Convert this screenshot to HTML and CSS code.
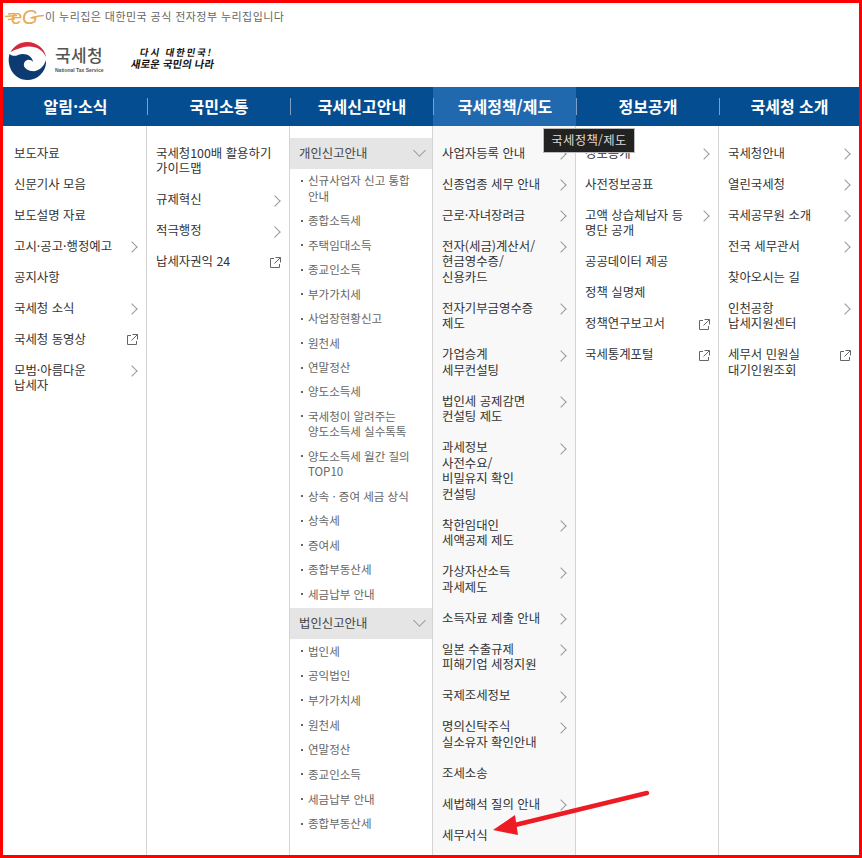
FILE: index.html
```html
<!DOCTYPE html>
<html lang="ko">
<head>
<meta charset="utf-8">
<title>국세청</title>
<link rel="stylesheet" href="styles.css">
</head>
<body>
<div class="frame">
  <div class="gov">
    <svg class="eg" width="40" height="20" viewBox="0 0 40 20">
      <path d="M1 10.500 L13 9.500 M4 8 L11 7.500 M4 13.500 L11 13 M28 11.500 C32 10.500 36 9.500 40 9.500" stroke="#e8ab55" stroke-width="1.500" fill="none"/>
      <text x="7" y="18" class="eg-t">eG</text>
    </svg>
    <span>이 누리집은 대한민국 공식 전자정부 누리집입니다</span>
  </div>
  <div class="brand">
    <svg class="emblem" width="38" height="38" viewBox="0 0 38 38">
      <path d="M1.500 12 C-2 24 6 38 19 38 C31 38 39 28 38 18 C36 25 30 30 23.500 29 C17 28 14 23 17 19.500 C19 17 23 17 25 20 C24.500 14 17 10 10 13 C7 14.500 4 14 1.500 12Z" fill="#0d3a70"/>
      <path d="M2.500 10 C6 4 12 0 19 0 C29 0 37 7 38 15 C35 8 28 4 20 4.500 C13 5 7 8 2.500 10Z" fill="#d8263c"/>
    </svg>
    <div class="ntx">
      <strong>국세청</strong>
      <small>National Tax Service</small>
    </div>
    <div class="slogan">
      <span>다시 대한민국!</span>
      <span>새로운 국민의 나라</span>
    </div>
  </div>
  <nav class="gnb">
    <a>알림·소식</a><a>국민소통</a><a>국세신고안내</a><a class="on">국세정책/제도</a><a>정보공개</a><a>국세청 소개</a>
  </nav>
  <div class="menu">
    <ul class="col first">
      <li>보도자료</li>
      <li>신문기사 모음</li>
      <li>보도설명 자료</li>
      <li class="more">고시·공고·행정예고</li>
      <li>공지사항</li>
      <li class="more">국세청 소식</li>
      <li class="ext">국세청 동영상</li>
      <li class="more">모범·아름다운<br>납세자</li>
    </ul>
    <ul class="col">
      <li>국세청100배 활용하기<br>가이드맵</li>
      <li class="more">규제혁신</li>
      <li class="more">적극행정</li>
      <li class="ext">납세자권익 24</li>
    </ul>
    <div class="col tree">
      <h3>개인신고안내</h3>
      <ul>
        <li>신규사업자 신고 통합<br>안내</li>
        <li>종합소득세</li>
        <li>주택임대소득</li>
        <li>종교인소득</li>
        <li>부가가치세</li>
        <li>사업장현황신고</li>
        <li>원천세</li>
        <li>연말정산</li>
        <li>양도소득세</li>
        <li>국세청이 알려주는<br>양도소득세 실수톡톡</li>
        <li>양도소득세 월간 질의<br>TOP10</li>
        <li>상속 · 증여 세금 상식</li>
        <li>상속세</li>
        <li>증여세</li>
        <li>종합부동산세</li>
        <li>세금납부 안내</li>
      </ul>
      <h3>법인신고안내</h3>
      <ul class="corp">
        <li>법인세</li>
        <li>공익법인</li>
        <li>부가가치세</li>
        <li>원천세</li>
        <li>연말정산</li>
        <li>종교인소득</li>
        <li>세금납부 안내</li>
        <li>종합부동산세</li>
      </ul>
    </div>
    <ul class="col grey">
      <li class="more">사업자등록 안내</li>
      <li class="more">신종업종 세무 안내</li>
      <li class="more">근로·자녀장려금</li>
      <li class="more">전자(세금)계산서/<br>현금영수증/<br>신용카드</li>
      <li class="more">전자기부금영수증<br>제도</li>
      <li class="more">가업승계<br>세무컨설팅</li>
      <li class="more">법인세 공제감면<br>컨설팅 제도</li>
      <li class="more">과세정보<br>사전수요/<br>비밀유지 확인<br>컨설팅</li>
      <li class="more">착한임대인<br>세액공제 제도</li>
      <li class="more">가상자산소득<br>과세제도</li>
      <li class="more">소득자료 제출 안내</li>
      <li class="more">일본 수출규제<br>피해기업 세정지원</li>
      <li class="more">국제조세정보</li>
      <li class="more">명의신탁주식<br>실소유자 확인안내</li>
      <li>조세소송</li>
      <li class="more">세법해석 질의 안내</li>
      <li>세무서식</li>
    </ul>
    <ul class="col">
      <li class="more">정보공개</li>
      <li>사전정보공표</li>
      <li class="more">고액 상습체납자 등<br>명단 공개</li>
      <li>공공데이터 제공</li>
      <li>정책 실명제</li>
      <li class="ext">정책연구보고서</li>
      <li class="ext">국세통계포털</li>
    </ul>
    <ul class="col">
      <li class="more">국세청안내</li>
      <li class="more">열린국세청</li>
      <li class="more">국세공무원 소개</li>
      <li class="more">전국 세무관서</li>
      <li>찾아오시는 길</li>
      <li class="more">인천공항<br>납세지원센터</li>
      <li class="ext">세무서 민원실<br>대기인원조회</li>
    </ul>
  </div>
  <div class="tip">국세정책/제도</div>
  <svg class="arrow" width="170" height="60" viewBox="0 0 170 60">
    <path d="M162 9 L30 41" stroke="#ed1c24" stroke-width="4.500" stroke-linecap="round"/>
    <path d="M8 46 L30 31 L33 51 Z" fill="#ed1c24"/>
  </svg>
</div>
</body>
</html>
```
FILE: styles.css
```css
* { box-sizing: border-box; }
html, body { margin: 0; padding: 0; }
body { background: #fff; font-family: "Noto Sans CJK KR", "Noto Sans", sans-serif; color: #333; }
ul { list-style: none; margin: 0; padding: 0; }
h3 { margin: 0; font-weight: 400; }

.frame { position: relative; width: 862px; height: 858px; border: 3px solid #f00; overflow: hidden; display: flex; flex-direction: column; }

.gov { height: 27px; display: flex; align-items: center; gap: 1px; padding-left: 1px; padding-bottom: 2px; font-size: 11px; letter-spacing: 0.44px; color: #666; flex: none; }
.eg { flex: none; }
.eg-t { font: italic 400 20px "Liberation Sans", sans-serif; fill: #e8ab55; letter-spacing: 0; }

.brand { height: 57px; flex: none; display: flex; align-items: center; padding-left: 5px; padding-top: 5px; }
.emblem { flex: none; }
.ntx { margin: -3px 0 0 9px; width: 72px; display: flex; flex-direction: column; gap: 3px; }
.ntx strong { font-size: 17px; line-height: 19px; font-weight: 500; color: #555; letter-spacing: 0.4px; }
.ntx small { font-size: 5px; line-height: 7px; color: #555; font-family: "Liberation Sans", sans-serif; font-weight: 700; }
.slogan { margin: -6px 0 0 5px; display: flex; flex-direction: column; font-size: 10.5px; line-height: 12px; font-weight: 700; color: #111; transform: skewX(-10deg); white-space: nowrap; }
.slogan span:first-child { padding-left: 7px; font-size: 9.5px; letter-spacing: 1.8px; }

.gnb { flex: none; height: 39px; background: #034d90; display: grid; grid-template-columns: 144px 143px 143px 143px 143px 1fr; }
.gnb a { display: flex; align-items: center; justify-content: center; color: #fff; font-size: 16px; font-weight: 700; position: relative; padding: 0 0 1px 1px; }
.gnb a + a::before { content: ""; position: absolute; left: 0; top: 11px; height: 17px; border-left: 1px solid #7f9fc4; }
.gnb a.on { background: #2169ae; }

.menu { flex: 1; display: grid; grid-template-columns: 144px 143px 143px 143px 143px 1fr; min-height: 0; }
.col { border-right: 1px solid #d4d4d4; padding-top: 12px; font-size: 12.4px; line-height: 15.5px; min-width: 0; white-space: nowrap; }
.col:last-child { border-right: 0; }
.col > li { padding: 7.75px 20px 7.75px 9px; position: relative; }
.col.first > li { padding-left: 11px; }
.col.grey { background: #f8f8f8; }

.more::after { content: ""; position: absolute; right: 10.500px; top: 12px; width: 7px; height: 7px; border-top: 1px solid #999; border-right: 1px solid #999; transform: rotate(45deg); }
.ext::after { content: ""; position: absolute; right: 8px; top: 10px; width: 11px; height: 11px; background: no-repeat center / 11px 11px url("data:image/svg+xml,%3Csvg xmlns='http://www.w3.org/2000/svg' viewBox='0 0 11 11'%3E%3Cpath d='M4 1.500H.5v9h9V7M5.500 .5h5v5M10.500 .5L4.500 6.500' fill='none' stroke='%23666'/%3E%3C/svg%3E"); }

.tree { font-size: 11.5px; line-height: 15.5px; color: #666; }
.tree h3 { height: 31px; background: #e5e5e5; padding-left: 9px; font-size: 12.4px; line-height: 30px; color: #444; position: relative; }
.tree h3::after { content: ""; position: absolute; right: 8px; top: 8px; width: 8px; height: 8px; border-right: 1px solid #999; border-bottom: 1px solid #999; transform: rotate(45deg); }
.tree ul { margin-bottom: 1.500px; }
.tree li { padding: 4.480px 10px 4.480px 18px; position: relative; }
.tree .corp li { padding-top: 4.600px; padding-bottom: 4.600px; }
.tree li::before { content: ""; position: absolute; left: 11px; top: 11px; width: 2px; height: 2px; background: #666; }

.tip { position: absolute; left: 540px; top: 125px; width: 92px; height: 25px; background: #222; border: 1px solid #bbb; color: #ddd; font-size: 12.4px; letter-spacing: 0.3px; line-height: 23px; text-align: center; }
.arrow { position: absolute; left: 482px; top: 781px; }
```
